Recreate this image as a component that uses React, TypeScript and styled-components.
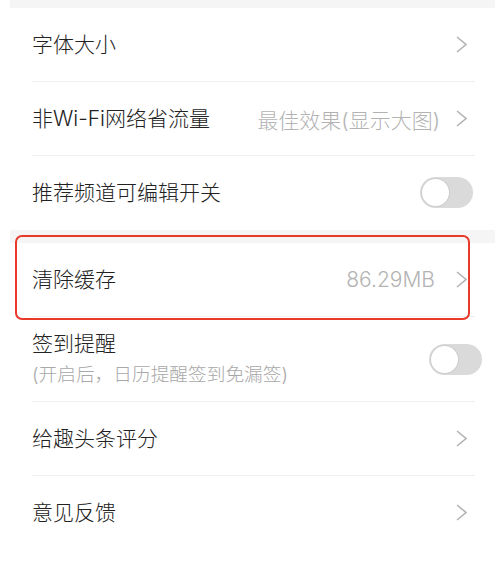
import React from "react";
import styled, { createGlobalStyle } from "styled-components";

const GlobalStyle = createGlobalStyle`
  body {
    margin: 0;
    background: #ffffff;
    font-family: Inter, "Noto Sans CJK SC", sans-serif;
  }
`;

type Item = {
  title: string;
  sub?: string;
  value?: string;
  toggle?: boolean;
  shift?: number;
  marked?: boolean;
};

const groups: Item[][] = [
  [
    { title: "字体大小" },
    { title: "非Wi-Fi网络省流量", value: "最佳效果(显示大图)" },
    { title: "推荐频道可编辑开关", toggle: true, shift: -6 },
  ],
  [
    { title: "清除缓存", value: "86.29MB", marked: true },
    {
      title: "签到提醒",
      sub: "(开启后，日历提醒签到免漏签)",
      toggle: true,
      shift: -15,
    },
    { title: "给趣头条评分" },
    { title: "意见反馈" },
  ],
];

const Chevron = () => (
  <svg width="11" height="17" viewBox="0 0 11 17" fill="none">
    <polyline
      points="1,1 10,8.5 1,16"
      stroke="#b3b3b3"
      strokeWidth="1.6"
      strokeLinejoin="miter"
    />
  </svg>
);

const isLatin = (s: string) => /^[\x20-\x7e]+$/.test(s);

const App = () => {
  return (
    <>
      <GlobalStyle />
      <Page>
        <Gap size={8} />
        {groups.map((group, gi) => (
          <React.Fragment key={gi}>
            {gi > 0 && <Gap size={13} />}
            <Group>
              {group.map((item, i) => {
                const last = i === group.length - 1;
                return (
                  <RowWrap key={i}>
                    <Row last={last} tall={!!item.sub}>
                      <Texts>
                        <Title>{item.title}</Title>
                        {item.sub && <Sub>{item.sub}</Sub>}
                      </Texts>
                      {item.value && (
                        <Value latin={isLatin(item.value)}>{item.value}</Value>
                      )}
                      {item.toggle ? (
                        <Toggle shift={item.shift || 0}>
                          <Knob />
                        </Toggle>
                      ) : (
                        <Chevron />
                      )}
                    </Row>
                    {item.marked && <Highlight />}
                  </RowWrap>
                );
              })}
            </Group>
          </React.Fragment>
        ))}
      </Page>
    </>
  );
};

export default App;

const Page = styled.div`
  margin-left: 10px;
  width: 485px;
  background: #ffffff;
`;

const Gap = styled.div<{ size: number }>`
  height: ${(p) => p.size}px;
  background: #f5f5f5;
`;

const Group = styled.div`
  background: #ffffff;
`;

const RowWrap = styled.div`
  position: relative;
  padding: 0 20px 0 22px;
`;

const Row = styled.div<{ last: boolean; tall: boolean }>`
  display: flex;
  align-items: center;
  height: ${(p) => (p.tall ? 84 : 73)}px;
  padding-right: 8px;
  border-bottom: 1px solid ${(p) => (p.last ? "transparent" : "#efefef")};
`;

const Texts = styled.div`
  display: flex;
  flex-direction: column;
  flex: 1;
`;

const Title = styled.span`
  font-size: 21px;
  font-weight: 300;
  line-height: 28px;
  color: #222222;
`;

const Sub = styled.span`
  margin-top: 4px;
  font-size: 18.7px;
  font-weight: 300;
  line-height: 26px;
  color: #a8a8a8;
`;

const Value = styled.span<{ latin: boolean }>`
  margin-right: ${(p) => (p.latin ? 21 : 16)}px;
  font-size: 21px;
  font-weight: 300;
  color: #b3b3b3;
`;

const Toggle = styled.div<{ shift: number }>`
  display: flex;
  align-items: center;
  width: 53px;
  height: 31px;
  margin-right: ${(p) => p.shift}px;
  padding: 2px;
  box-sizing: border-box;
  border-radius: 16px;
  background: #dadada;
`;

const Knob = styled.div`
  width: 27px;
  height: 27px;
  border-radius: 50%;
  background: #ffffff;
  box-shadow: 0 0 0 1px rgba(0, 0, 0, 0.06);
`;

const Highlight = styled.div`
  position: absolute;
  top: -8px;
  left: 5px;
  width: 455px;
  height: 85px;
  box-sizing: border-box;
  border: 2.5px solid #e8392b;
  border-radius: 7px;
  pointer-events: none;
`;
